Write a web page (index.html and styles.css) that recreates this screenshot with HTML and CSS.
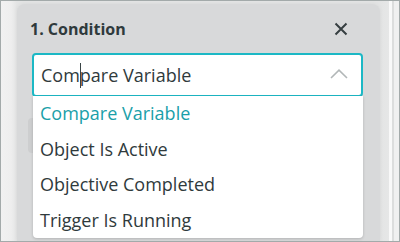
FILE: index.html
```html
<!DOCTYPE html>
<html>
<head>
<meta charset="utf-8">
<link rel="stylesheet" href="styles.css">
</head>
<body>
<div class="frame">
  <div class="panel">
    <div class="header">
      <span class="title">1. Condition</span>
      <svg class="close" width="14" height="14" viewBox="0 0 14 14"><path d="M1.5 1.5 L12.5 12.5 M12.5 1.5 L1.5 12.5" stroke="#363f41" stroke-width="2" fill="none"/></svg>
    </div>
    <div class="select">
      <span class="value">Com<span class="caret"></span>pare Variable</span>
      <svg class="chevron" width="18" height="10" viewBox="0 0 18 10"><path d="M1 9 L9 1.2 L17 9" stroke="#b2b7b8" stroke-width="1.6" fill="none"/></svg>
    </div>
    <div class="ghost"></div>
    <ul class="menu">
      <li class="item active">Compare Variable</li>
      <li class="item">Object Is Active</li>
      <li class="item">Objective Completed</li>
      <li class="item">Trigger Is Running</li>
    </ul>
  </div>
  <div class="rail"></div>
</div>
</body>
</html>
```
FILE: styles.css
```css
html, body {
  margin: 0;
  padding: 0;
  background: #efefef;
}
.frame {
  width: 400px;
  height: 242px;
  box-sizing: border-box;
  border: 1px solid #a3aaaa;
  background: linear-gradient(to right, #f1f1f1 0, #eeeeee 10px, #e3e4e4 16px);
  display: flex;
  padding: 3px 0 0 16px;
  overflow: hidden;
  font-family: "Open Sans", sans-serif;
}
.panel {
  position: relative;
  width: 363px;
  flex: none;
  background: #d8d9da;
  border-radius: 8px 8px 0 0;
  box-shadow: 0 0 4px rgba(0,0,0,0.06);
}
.header {
  display: flex;
  justify-content: space-between;
  align-items: center;
  height: 22px;
  margin-top: 14px;
  padding: 0 32px 0 13px;
}
.title {
  font-weight: 700;
  font-size: 16px;
  line-height: 22px;
  color: #2f3a3c;
}
.close {
  display: block;
}
.select {
  margin: 13px 0 0 15px;
  width: 331px;
  height: 44px;
  box-sizing: border-box;
  border: 2px solid #1cb8c5;
  border-radius: 4px;
  background: #ffffff;
  display: flex;
  align-items: center;
  justify-content: space-between;
  padding: 0 13px 0 7px;
}
.value {
  font-size: 18px;
  color: #2f3a3c;
  white-space: nowrap;
}
.caret {
  display: inline-block;
  width: 1px;
  height: 25px;
  margin: 0 -1px 0 0;
  background: #3a4446;
  vertical-align: -6px;
}
.chevron {
  display: block;
  margin-top: -2px;
}
.ghost {
  margin: 21px 0 0 11px;
  width: 300px;
  height: 35px;
  border-radius: 4px;
  background: #cdcecf;
}
.menu {
  position: absolute;
  left: 16px;
  top: 92px;
  width: 330px;
  height: 142px;
  margin: 0;
  padding: 0;
  list-style: none;
  background: #ffffff;
  border-radius: 0 0 4px 4px;
  box-shadow: 0 1px 3px rgba(0,0,0,0.18);
}
.item {
  height: 35.5px;
  line-height: 35.5px;
  padding-left: 7px;
  font-size: 18px;
  color: #2f3a3c;
  white-space: nowrap;
}
.item.active {
  color: #1a9fa9;
}
.rail {
  flex: 1;
  margin-top: -3px;
  background: linear-gradient(to right, #e3e4e4 0, #e6e7e7 9px, #f9f9f9 9px, #f9f9f9 12px, #dcdddd 12px, #dcdddd 14px, #f0f0f0 14px);
}
```
